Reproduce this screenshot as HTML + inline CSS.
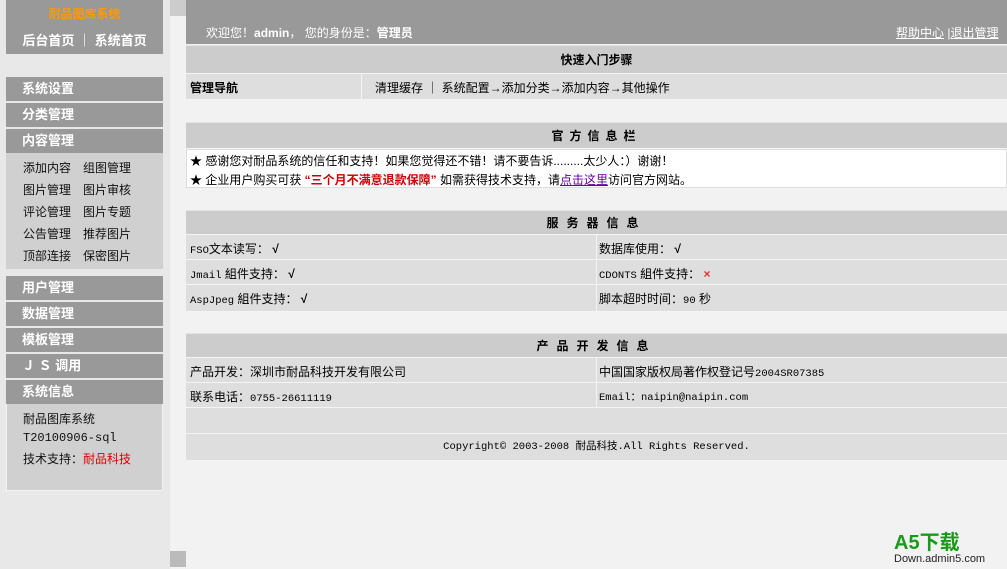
<!DOCTYPE html>
<html><head><meta charset="utf-8"><style>
*{margin:0;padding:0;box-sizing:border-box}
body{width:1007px;height:569px;overflow:hidden;background:#f2f2f2;font-family:"Liberation Sans","Noto Sans CJK SC","WenQuanYi Zen Hei",sans-serif;font-size:12px;color:#000;position:relative}
.a{position:absolute}
.side{left:0;top:0;width:170px;height:569px;background:#e8e8e8}
.m{left:6px;width:157px;height:24px;background:#999;color:#fff;font-weight:bold;font-size:13px;line-height:23px;padding-left:16px}
.sub{left:6px;width:157px;background:#d0d0d0}
.sub div{position:absolute;font-size:12px;color:#111}
.row{position:absolute;left:186px;width:821px;border-bottom:1px solid #f4f4f4}
.hd{background:#ccc;text-align:center;font-weight:bold;font-size:12px;border-top:1px solid #e4e4e4}
.c{background:#dedede}
.t{position:absolute;white-space:nowrap}
.mono{font-family:"Liberation Mono","Noto Sans CJK SC",monospace;font-size:10.5px}
.split{position:absolute;top:0;bottom:0;width:1px;background:#f4f4f4}
</style></head><body>
<div class="a side"></div>
<div class="a" style="left:6px;top:0;width:157px;height:54px;background:#999"></div>
<div class="a" style="left:6px;top:5px;width:157px;text-align:center;color:#f90;font-weight:bold;font-size:12px">耐品图库系统</div>
<div class="a" style="left:6px;top:30px;width:157px;text-align:center;color:#fff;font-weight:bold;font-size:13px">后台首页 ｜ 系统首页</div>
<div class="a m" style="top:77px">系统设置</div>
<div class="a m" style="top:103px">分类管理</div>
<div class="a m" style="top:129px">内容管理</div>
<div class="a sub" style="top:153px;height:116px">
<div style="left:17px;top:6px">添加内容　组图管理</div>
<div style="left:17px;top:28px">图片管理　图片审核</div>
<div style="left:17px;top:50px">评论管理　图片专题</div>
<div style="left:17px;top:72px">公告管理　推荐图片</div>
<div style="left:17px;top:94px">顶部连接　保密图片</div>
</div>
<div class="a m" style="top:276px">用户管理</div>
<div class="a m" style="top:302px">数据管理</div>
<div class="a m" style="top:328px">模板管理</div>
<div class="a m" style="top:354px">Ｊ Ｓ 调用</div>
<div class="a m" style="top:380px">系统信息</div>
<div class="a sub" style="top:404px;height:87px;border:1px solid #f4f4f4;border-top:none">
<div style="left:16px;top:6px">耐品图库系统</div>
<div style="left:16px;top:27px" class="mono">T20100906-sql</div>
<div style="left:16px;top:46px">技术支持：<span style="color:#d00">耐品科技</span></div>
</div>
<div class="a" style="left:170px;top:0;width:16px;height:16px;background:#ccc"></div>
<div class="a" style="left:170px;top:551px;width:16px;height:16px;background:#bbb"></div>
<div class="a" style="left:186px;top:0;width:821px;height:44px;background:#999"></div>
<div class="a" style="left:206px;top:24px;color:#fff;font-size:12px">欢迎您！<b>admin</b>， 您的身份是：<b>管理员</b></div>
<div class="a" style="left:896px;top:24px;color:#fff;font-size:12px"><u>帮助中心</u> |<u>退出管理</u></div>

<div class="row hd" style="top:45px;height:29px;line-height:28px">快速入门步骤</div>
<div class="row c" style="top:74px;height:26px">
<div class="t" style="left:4px;top:5px;font-weight:bold">管理导航</div>
<div class="split" style="left:175px"></div>
<div class="t" style="left:189px;top:5px">清理缓存 ｜ 系统配置→添加分类→添加内容→其他操作</div></div>

<div class="row hd" style="top:122px;height:27px;line-height:26px;letter-spacing:6px">官方信息栏</div>
<div class="row" style="top:149px;height:39px;background:#fff;border:1px solid #ddd">
<div class="t" style="left:3px;top:2px">★ 感谢您对耐品系统的信任和支持！如果您觉得还不错！请不要告诉.........太少人：）谢谢！</div>
<div class="t" style="left:3px;top:21px">★ 企业用户购买可获 <b style="color:#c00">“三个月不满意退款保障”</b> 如需获得技术支持，请<u style="color:#609">点击这里</u>访问官方网站。</div></div>

<div class="row hd" style="top:210px;height:25px;line-height:25px;letter-spacing:8px">服务器信息</div>
<div class="row c" style="top:235px;height:25px"><div class="t" style="left:4px;top:5px"><span class="mono">FSO</span>文本读写： <b>√</b></div><div class="split" style="left:410px"></div><div class="t" style="left:413px;top:5px">数据库使用： <b>√</b></div></div>
<div class="row c" style="top:260px;height:25px"><div class="t" style="left:4px;top:5px"><span class="mono">Jmail</span> 組件支持： <b>√</b></div><div class="split" style="left:410px"></div><div class="t" style="left:413px;top:5px"><span class="mono">CDONTS</span> 組件支持： <b style="color:#d33">×</b></div></div>
<div class="row c" style="top:285px;height:27px"><div class="t" style="left:4px;top:5px"><span class="mono">AspJpeg</span> 組件支持： <b>√</b></div><div class="split" style="left:410px"></div><div class="t" style="left:413px;top:5px">脚本超时时间：<span class="mono">90</span> 秒</div></div>

<div class="row hd" style="top:333px;height:25px;line-height:25px;letter-spacing:8px">产品开发信息</div>
<div class="row c" style="top:358px;height:25px"><div class="t" style="left:4px;top:5px">产品开发：深圳市耐品科技开发有限公司</div><div class="split" style="left:410px"></div><div class="t" style="left:413px;top:5px">中国国家版权局著作权登记号<span class="mono">2004SR07385</span></div></div>
<div class="row c" style="top:383px;height:25px"><div class="t" style="left:4px;top:5px">联系电话：<span class="mono">0755-26611119</span></div><div class="split" style="left:410px"></div><div class="t mono" style="left:413px;top:6px">Email：naipin@naipin.com</div></div>
<div class="row c" style="top:408px;height:26px"></div>
<div class="row c" style="top:434px;height:27px;text-align:center"><span class="mono" style="line-height:26px">Copyright© 2003-2008 耐品科技.All Rights Reserved.</span></div>

<div class="a" style="left:894px;top:533px;color:#1a9a1a;font-weight:bold;font-size:20px;line-height:20px">A5下载</div>
<div class="a" style="left:894px;top:553px;color:#222;font-size:11px">Down.admin5.com</div>
</body></html>
